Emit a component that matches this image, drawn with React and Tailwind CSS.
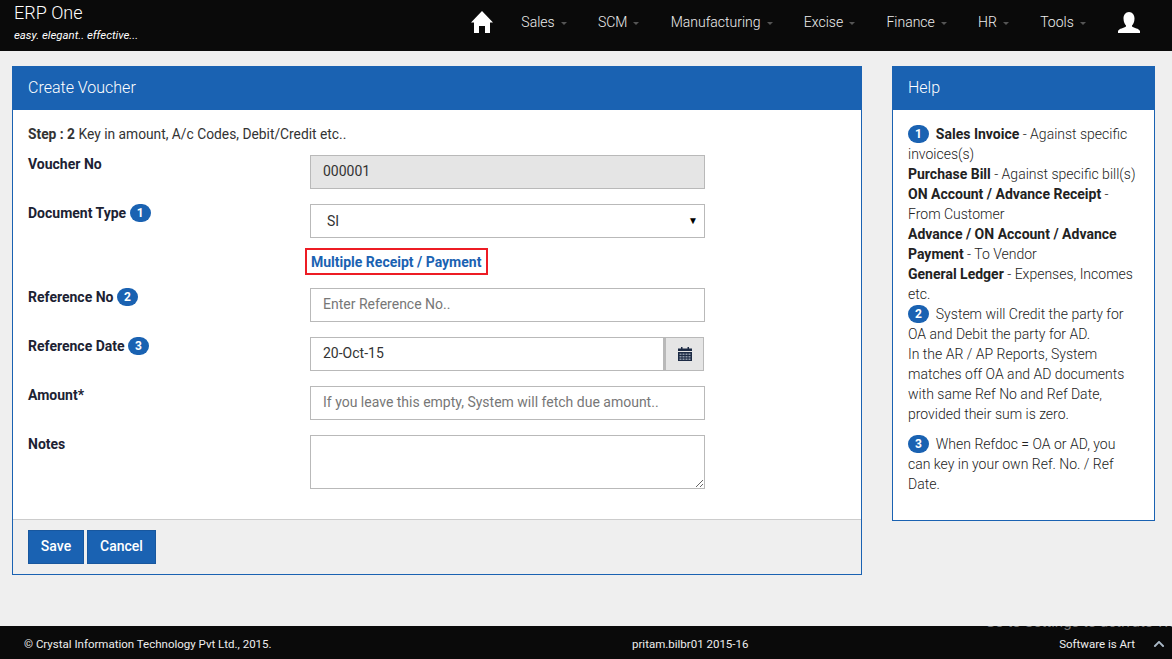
import { FaChevronUp } from 'react-icons/fa';

const navItems = ['Sales', 'SCM', 'Manufacturing', 'Excise', 'Finance', 'HR', 'Tools'];

const HomeIcon = () => (
  <svg width="22" height="22" viewBox="0 0 22 22" fill="#fff" className="mr-[28px]">
    <path d="M11 0 22 11.5H19V22H14V15H8V22H3V11.5H0Z" />
  </svg>
);

const UserIcon = () => (
  <svg width="22" height="21" viewBox="0 0 22 21" fill="#fff" className="ml-[1px]">
    <path d="M11 0C7.5 0 5.5 3 5.5 6.5 5.5 10 7 12.5 8 13.5V14.5C6 16 1 16.5 0 19V21H22V19C21 16.5 16 16 14 14.5V13.5C15 12.5 16.5 10 16.5 6.5 16.5 3 14.5 0 11 0Z" />
  </svg>
);

const CalendarIcon = () => (
  <svg width="14" height="14" viewBox="0 0 14 14">
    <path d="M0 1.5H3V0H4.5V1.5H9.5V0H11V1.5H14V4H0Z" fill="#1c2a44" />
    <path d="M0 5H14V14H0Z" fill="#1c2a44" />
    <path d="M1.5 6.5h2v1.5h-2zM4.5 6.5h2v1.5h-2zM7.5 6.5h2v1.5h-2zM10.5 6.5h2v1.5h-2zM1.5 9h2v1.5h-2zM4.5 9h2v1.5h-2zM7.5 9h2v1.5h-2zM10.5 9h2v1.5h-2zM1.5 11.5h2V13h-2zM4.5 11.5h2V13h-2zM7.5 11.5h2V13h-2zM10.5 11.5h2V13h-2z" fill="#8d98a8" />
  </svg>
);

const Badge = ({ n }) => (
  <span className="inline-flex h-[18px] w-[21px] items-center justify-center rounded-full bg-[#1a62b2] align-[1px] text-xs font-bold leading-none text-white">
    {n}
  </span>
);

const Row = ({ label, n, children, className = 'mb-[15px]' }) => (
  <div className={`grid grid-cols-[282px_395px] ${className}`}>
    <label className="text-sm font-bold leading-[18px] text-[#1c2233]">
      {label} {n && <Badge n={n} />}
    </label>
    <div>{children}</div>
  </div>
);

const inputCls =
  'block h-[34px] w-full border border-[#b9b9b9] pb-[2px] pl-[12px] pr-[12px] text-sm text-[#333] outline-none placeholder:text-[#777]';

export default function App() {
  return (
    <div className="flex h-[659px] flex-col overflow-hidden bg-[#efefef] font-['Roboto',sans-serif] text-sm text-[#333]">
      <header className="flex h-[51px] shrink-0 items-start justify-between bg-[#0a0a0a] text-white">
        <div className="pl-[14px] pt-[1px]">
          <div className="text-lg font-light leading-[24px]">ERP One</div>
          <div className="mt-[3px] text-[11.4px] italic leading-[14px]">easy. elegant.. effective...</div>
        </div>
        <nav className="flex items-center pr-[32px] pt-[10px]">
          <HomeIcon />
          {navItems.map((item) => (
            <span key={item} className="mr-[31.25px] flex items-center text-sm font-light leading-6 text-[#eeeeee]">
              {item}
              <span className="ml-[6px] mt-[2px] border-x-[3.5px] border-t-[3.5px] border-x-transparent border-t-[#555]" />
            </span>
          ))}
          <UserIcon />
        </nav>
      </header>

      <main className="flex flex-1 items-start pl-3 pr-[17px] pt-[15px]">
        <section className="w-[850px] border border-[#1a62b2] bg-white">
          <h2 className="flex h-[43px] items-center bg-[#1a62b2] pb-px pl-[15px] text-base font-light text-white">Create Voucher</h2>
          <div className="px-[15px] pt-[14px]">
            <p className="mb-[11px] h-5 text-[13.8px] leading-5">
              <b className="font-bold">Step : 2</b> Key in amount, A/c Codes, Debit/Credit etc..
            </p>
            <Row label="Voucher No">
              <input className={`${inputCls} bg-[#e5e5e5]`} readOnly value="000001" />
            </Row>
            <Row label="Document Type" n="1" className="mb-[10px]">
              <div className="flex h-[34px] items-center justify-between border border-[#b9b9b9] bg-white pl-[16px] pr-[6px] text-sm">
                SI
                <span className="text-[10px] text-black">▼</span>
              </div>
            </Row>
            <div className="mb-[13px] ml-[277px] flex h-[27px] w-[183px] items-center border-2 border-[#ed1c24] pl-[4px] text-sm font-bold text-[#1a62b2]">
              Multiple Receipt / Payment
            </div>
            <Row label="Reference No" n="2">
              <input className={`${inputCls} bg-white`} placeholder="Enter Reference No.." />
            </Row>
            <Row label="Reference Date" n="3">
              <div className="flex pr-px">
                <input className={`${inputCls} min-w-0 flex-1 bg-white`} readOnly value="20-Oct-15" />
                <span className="flex h-[34px] w-[40px] items-center justify-center border-y border-r border-l-2 border-[#b9b9b9] bg-[#e5e5e5]">
                  <CalendarIcon />
                </span>
              </div>
            </Row>
            <Row label="Amount*">
              <input className={`${inputCls} bg-white`} placeholder="If you leave this empty, System will fetch due amount.." />
            </Row>
            <Row label="Notes" className="mb-[30px]">
              <textarea className="block h-[54px] w-full border border-[#b9b9b9] bg-white outline-none" />
            </Row>
          </div>
          <div className="flex h-[55px] gap-[3px] border-t border-[#cccccc] bg-[#efefef] pl-[15px] pt-[10px]">
            <button className="h-[34px] w-[56px] border border-[#18579e] bg-[#1a62b2] pb-[3px] text-sm font-medium text-white">Save</button>
            <button className="h-[34px] w-[69px] border border-[#18579e] bg-[#1a62b2] pb-[3px] text-sm font-medium text-white">Cancel</button>
          </div>
        </section>

        <aside className="ml-[30px] w-[263px] border border-[#1a62b2] bg-white">
          <h2 className="flex h-[43px] items-center bg-[#1a62b2] pb-px pl-[15px] text-base font-light text-white">Help</h2>
          <div className="h-[410px] px-[15px] pt-[14px] text-sm font-light leading-5 text-[#222]">
            <p>
              <Badge n="1" /> &nbsp;<b className="font-bold">Sales Invoice</b> - Against specific invoices(s)
              <br />
              <b className="font-bold">Purchase Bill</b> - Against specific bill(s)
              <br />
              <b className="font-bold">ON Account / Advance Receipt</b> - From Customer
              <br />
              <b className="font-bold">Advance / ON Account / Advance Payment</b> - To Vendor
              <br />
              <b className="font-bold">General Ledger</b> - Expenses, Incomes etc.
              <br />
              <Badge n="2" /> &nbsp;System will Credit the party for OA and Debit the party for AD.
              <br />
              In the AR / AP Reports, System matches off OA and AD documents with same Ref No and Ref Date, provided their sum is zero.
            </p>
            <p className="mt-[10px]">
              <Badge n="3" /> &nbsp;When Refdoc = OA or AD, you can key in your own Ref. No. / Ref Date.
            </p>
          </div>
        </aside>
      </main>

      <footer className="relative grid h-[33px] shrink-0 grid-cols-[608px_1fr_auto] items-center overflow-hidden bg-[#0a0a0a] pl-6 pr-[7px] pt-[4px] text-[11.5px] text-[#eeeeee]">
        <span className="absolute left-[985px] top-[-12px] whitespace-nowrap text-[15px] leading-4 text-[#777]">Go to Settings to activate Windows.</span>
        <span>© Crystal Information Technology Pvt Ltd., 2015.</span>
        <span>pritam.bilbr01 2015-16</span>
        <span className="flex items-center gap-[18px]">
          Software is Art
          <FaChevronUp className="text-[12px] text-[#a9b8c6]" />
        </span>
      </footer>
    </div>
  );
}
